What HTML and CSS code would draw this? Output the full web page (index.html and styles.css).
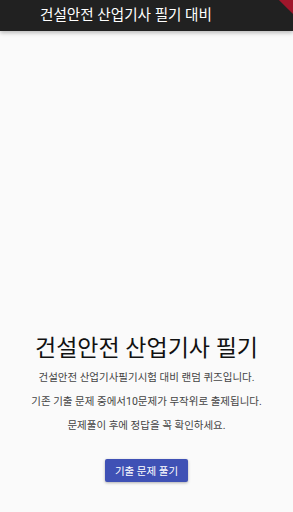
FILE: index.html
```html
<!DOCTYPE html>
<html lang="ko">
<head>
  <meta charset="UTF-8">
  <meta name="viewport" content="width=device-width, initial-scale=1.0">
  <title>건설안전 산업기사 필기 대비</title>
  <link rel="stylesheet" href="styles.css">
</head>
<body>
  <header class="app-bar">
    <h1>건설안전 산업기사 필기 대비</h1>
    <div class="debug-banner"></div>
  </header>
  <main class="home">
    <h2 class="home-title">건설안전 산업기사 필기</h2>
    <p class="home-text">건설안전 산업기사필기시험 대비 랜덤 퀴즈입니다.</p>
    <p class="home-text">기존 기출 문제 중에서10문제가 무작위로 출제됩니다.</p>
    <p class="home-text">문제풀이 후에 정답을 꼭 확인하세요.</p>
    <button class="start-btn">기출 문제 풀기</button>
  </main>
</body>
</html>
```

FILE: styles.css
```css
/* Base styles */
html, body {
  height: 100%;
}
body {
  margin: 0;
  padding: 0;
  background-color: #fafafa;
  font-family: Roboto, "Noto Sans CJK KR", sans-serif;
  display: flex;
  flex-direction: column;
  overflow: hidden;
}
.app-bar {
  position: relative;
  height: 31px;
  background-color: #212121;
  box-shadow: 0 2px 4px rgba(0, 0, 0, 0.25);
  display: flex;
  align-items: center;
  padding-left: 40px;
  overflow: hidden;
  flex-shrink: 0;
}
.app-bar h1 {
  margin: 0;
  color: #fff;
  font-size: 14.6px;
  font-weight: 400;
  position: relative;
  top: -2px;
}
/* Debug ribbon in the corner, mostly off screen */
.debug-banner {
  position: absolute;
  top: -4px;
  right: -24px;
  width: 60px;
  height: 10px;
  background-color: #a0162b;
  transform: rotate(45deg);
}
.home {
  flex: 1;
  display: flex;
  flex-direction: column;
  justify-content: flex-end;
  align-items: center;
  padding-bottom: 30px;
}
.home-title {
  margin: 0 0 3px;
  font-size: 23px;
  font-weight: 400;
  color: #111;
}
.home-text {
  margin: 0;
  font-size: 10.5px;
  line-height: 24px;
  color: #444;
}
.start-btn {
  margin-top: 21px;
  height: 23px;
  padding: 0 10px;
  border: none;
  border-radius: 2px;
  background-color: #3f51b5;
  color: #fff;
  font-family: inherit;
  font-size: 10.5px;
  box-shadow: 0 1px 3px rgba(0, 0, 0, 0.3);
}
```
